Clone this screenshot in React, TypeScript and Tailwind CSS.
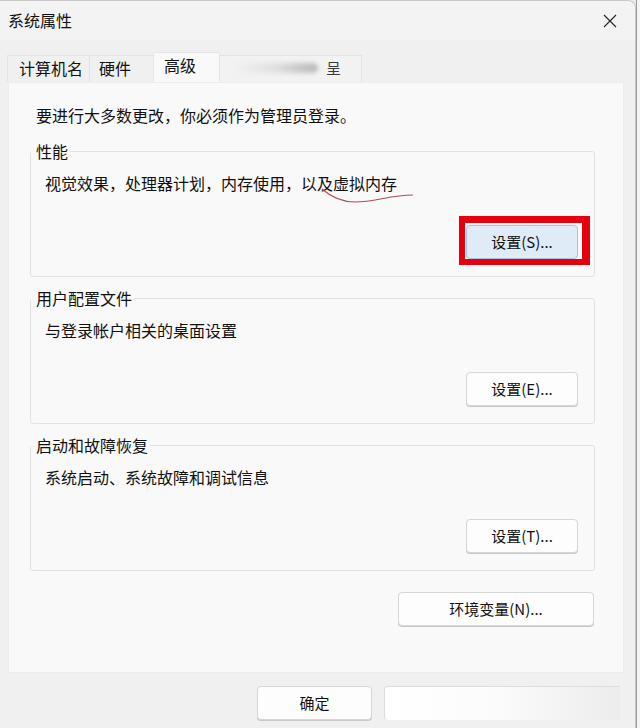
import React from 'react';

const FONT = { fontFamily: '"Noto Sans CJK SC", "Noto Sans", sans-serif' };

function WinButton({
  label,
  className = '',
  focused = false,
}: {
  label: string;
  className?: string;
  focused?: boolean;
}) {
  return (
    <div
      className={
        'h-[34px] flex items-center justify-center rounded-[4px] text-[15px] leading-[20px] text-[#111] ' +
        (focused
          ? 'bg-[#dfecf8] border border-[#a9c4e0] '
          : 'bg-[#fdfdfd] border border-[#d6d6d6] shadow-[0_1px_0_#c8c8c8] ') +
        className
      }
    >
      {label}
    </div>
  );
}

function Group({
  title,
  desc,
  button,
  focused = false,
  mark = false,
  className = '',
}: {
  title: string;
  desc: string;
  button: string;
  focused?: boolean;
  mark?: boolean;
  className?: string;
}) {
  return (
    <fieldset
      className={
        'border border-[#e2e2e2] rounded-[3px] px-0 pb-[17px] flex flex-col ' + className
      }
    >
      <legend className="pl-[5px] pr-[2px] text-[16px] leading-[20px] text-[#111]">{title}</legend>
      <div className="relative mt-[12px] ml-[14px] h-[20px] text-[16px] leading-[20px] text-[#111]">
        {desc}
        {mark && (
          <svg
            className="absolute left-[275px] top-[13px]"
            width="96"
            height="22"
            viewBox="0 0 96 22"
            fill="none"
          >
            <path
              d="M2 3 C 10 10, 20 16, 35 16 C 55 16, 70 9, 93 9"
              stroke="#b24a5a"
              strokeWidth="1.1"
            />
          </svg>
        )}
      </div>
      <div className="mt-[32px] mr-[16px] self-end relative">
        {focused && (
          <div className="absolute left-[-7px] right-[-12px] top-[-9px] bottom-[-6px] border-[#e5000d] border-l-[6px] border-t-[7px] border-r-[8px] border-b-[6px]" />
        )}
        <WinButton label={button} focused={focused} className="w-[112px]" />
      </div>
    </fieldset>
  );
}

export default function App() {
  return (
    <div className="w-[640px] h-[728px] bg-[#ececec] overflow-hidden flex" style={FONT}>
      {/* window */}
      <div className="w-[636px] h-full bg-[#f0f0f0] border-t border-r border-[#c9c9c9] rounded-tr-[8px] flex flex-col">
        {/* title bar */}
        <div className="h-[39px] flex items-center justify-between pl-[8px] pr-[18px] bg-[#f3f3f3] rounded-tr-[8px]">
          <span className="text-[16px] leading-[20px] text-[#111] -mt-[2px]">系统属性</span>
          <svg width="14" height="14" viewBox="0 0 14 14" fill="none">
            <path d="M1 1 L13 13 M13 1 L1 13" stroke="#222" strokeWidth="1.1" />
          </svg>
        </div>

        {/* tabs */}
        <div className="h-[42px] flex items-end pl-[7px] bg-[#f0f0f0]">
          <div className="w-[82px] h-[27px] flex items-center pl-[11px] pb-[2px] border-t border-l border-[#e3e3e3] text-[16px] leading-[20px] text-[#111]">
            计算机名
          </div>
          <div className="w-[64px] h-[27px] flex items-center pl-[9px] pb-[2px] border-t border-l border-[#e3e3e3] text-[16px] leading-[20px] text-[#111]">
            硬件
          </div>
          <div className="w-[67px] h-[30px] flex items-start pl-[10px] pt-[2px] bg-[#f9f9f9] border-t border-l border-r border-[#e6e6e6] rounded-t-[2px] text-[16px] leading-[20px] text-[#111]">
            高级
          </div>
          <div className="w-[142px] h-[27px] flex items-center pl-[12px] pb-[2px] border-t border-r border-[#e3e3e3] bg-[#f2f2f2]">
            <div className="w-[86px] h-[10px] rounded-full bg-gradient-to-r from-[#f2f2f2] via-[#e0e0e0] to-[#b9b9b9] blur-[2px]" />
            <span className="ml-[8px] text-[15px] leading-[20px] text-[#3a3a3a]">呈</span>
          </div>
        </div>

        {/* content panel */}
        <div className="ml-[8px] w-[616px] h-[591px] bg-[#f9f9f9] border border-[#ececec] pt-[22px] pl-[21px] pr-[28px] flex flex-col">
          <div className="ml-[6px] h-[20px] text-[16px] leading-[20px] text-[#111]">
            要进行大多数更改，你必须作为管理员登录。
          </div>

          <Group
            className="mt-[16px]"
            title="性能"
            desc="视觉效果，处理器计划，内存使用，以及虚拟内存"
            button="设置(S)..."
            focused
            mark
          />
          <Group
            className="mt-[11px]"
            title="用户配置文件"
            desc="与登录帐户相关的桌面设置"
            button="设置(E)..."
          />
          <Group
            className="mt-[11px]"
            title="启动和故障恢复"
            desc="系统启动、系统故障和调试信息"
            button="设置(T)..."
          />

          <div className="mt-[21px] self-end mr-[1px]">
            <WinButton label="环境变量(N)..." className="w-[196px]" />
          </div>
        </div>

        {/* bottom buttons */}
        <div className="flex-1 flex items-start pt-[13px] pl-[257px]">
          <WinButton label="确定" className="w-[115px]" />
          <div className="ml-[12px] w-[236px] h-[34px] rounded-l-[4px] border-l border-t border-[#dcdcdc] bg-gradient-to-r from-white via-[#fbfbfb] to-[#ececec]" />
        </div>
      </div>

      {/* background behind the window */}
      <div className="flex-1 h-full bg-[#f4f4f4] border-l border-[#9a9a9a]" />
    </div>
  );
}
